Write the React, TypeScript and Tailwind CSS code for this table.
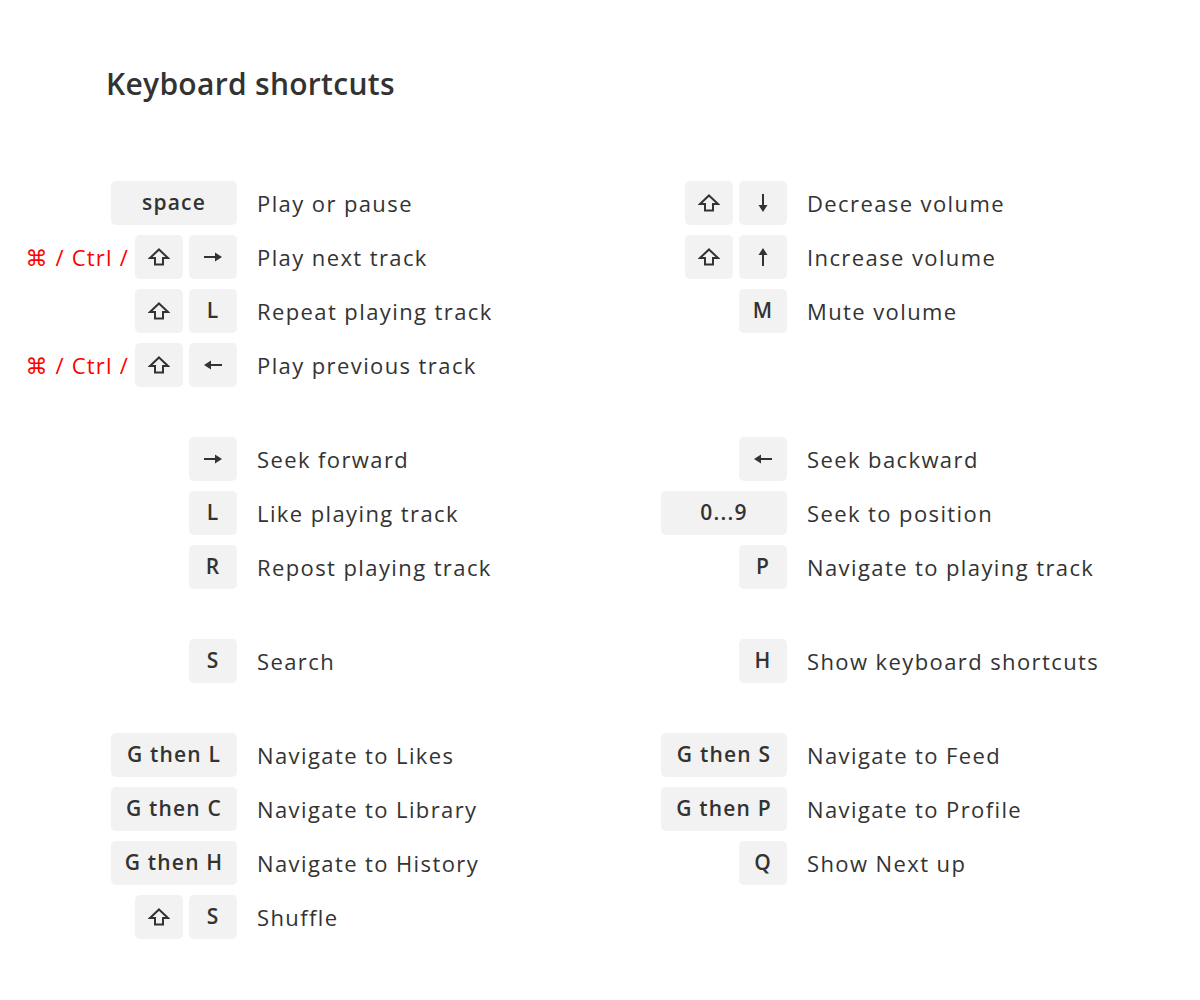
import React from 'react';

type KeyName = string;

type Row = {
  keys: KeyName[];
  label: string;
  prefix?: boolean;
};

type Group = {
  left: Row[];
  right: Row[];
};

const groups: Group[] = [
  {
    left: [
      { keys: ['space'], label: 'Play or pause' },
      { keys: ['shift', 'right'], label: 'Play next track', prefix: true },
      { keys: ['shift', 'L'], label: 'Repeat playing track' },
      { keys: ['shift', 'left'], label: 'Play previous track', prefix: true },
    ],
    right: [
      { keys: ['shift', 'down'], label: 'Decrease volume' },
      { keys: ['shift', 'up'], label: 'Increase volume' },
      { keys: ['M'], label: 'Mute volume' },
    ],
  },
  {
    left: [
      { keys: ['right'], label: 'Seek forward' },
      { keys: ['L'], label: 'Like playing track' },
      { keys: ['R'], label: 'Repost playing track' },
    ],
    right: [
      { keys: ['left'], label: 'Seek backward' },
      { keys: ['0...9'], label: 'Seek to position' },
      { keys: ['P'], label: 'Navigate to playing track' },
    ],
  },
  {
    left: [{ keys: ['S'], label: 'Search' }],
    right: [{ keys: ['H'], label: 'Show keyboard shortcuts' }],
  },
  {
    left: [
      { keys: ['G then L'], label: 'Navigate to Likes' },
      { keys: ['G then C'], label: 'Navigate to Library' },
      { keys: ['G then H'], label: 'Navigate to History' },
      { keys: ['shift', 'S'], label: 'Shuffle' },
    ],
    right: [
      { keys: ['G then S'], label: 'Navigate to Feed' },
      { keys: ['G then P'], label: 'Navigate to Profile' },
      { keys: ['Q'], label: 'Show Next up' },
    ],
  },
];

const ShiftIcon = () => (
  <svg width="22" height="18" viewBox="0 0 22 18" fill="none">
    <path
      d="M11 1.5 L20 10 H15 V16.5 H7 V10 H2 Z"
      stroke="#333"
      strokeWidth="2"
      strokeLinejoin="miter"
    />
  </svg>
);

const ArrowIcon = ({ dir }: { dir: 'left' | 'right' | 'up' | 'down' }) => {
  if (dir === 'left' || dir === 'right') {
    return (
      <svg width="18" height="10" viewBox="0 0 18 10" fill="#333">
        {dir === 'right' ? (
          <>
            <rect x="0" y="4" width="13" height="2" />
            <path d="M11 0.5 L18 5 L11 9.5 Z" />
          </>
        ) : (
          <>
            <rect x="5" y="4" width="13" height="2" />
            <path d="M7 0.5 L0 5 L7 9.5 Z" />
          </>
        )}
      </svg>
    );
  }
  return (
    <svg width="10" height="18" viewBox="0 0 10 18" fill="#333">
      {dir === 'down' ? (
        <>
          <rect x="4" y="0" width="2" height="13" />
          <path d="M0.5 11 L5 18 L9.5 11 Z" />
        </>
      ) : (
        <>
          <rect x="4" y="5" width="2" height="13" />
          <path d="M0.5 7 L5 0 L9.5 7 Z" />
        </>
      )}
    </svg>
  );
};

const Key = ({ name }: { name: KeyName }) => {
  const wide = name.length > 1 && !['shift', 'left', 'right', 'up', 'down'].includes(name);
  let content: React.ReactNode = name;
  if (name === 'shift') content = <ShiftIcon />;
  if (name === 'left' || name === 'right' || name === 'up' || name === 'down') content = <ArrowIcon dir={name} />;
  return (
    <div
      className={`${wide ? 'w-[126px]' : 'w-[48px]'} h-[44px] flex items-center justify-center rounded-[5px] bg-[#f2f2f2] text-[21px] font-semibold tracking-[1.2px] text-[#333]`}
    >
      {content}
    </div>
  );
};

const ShortcutRow = ({ row }: { row: Row }) => (
  <div className="flex items-center">
    <div className="w-[237px] flex items-center justify-end gap-[6px]">
      {row.prefix && (
        <span className="text-[22px] tracking-[1.2px] text-[#f00] whitespace-nowrap">⌘ / Ctrl /</span>
      )}
      {row.keys.map((k, i) => (
        <Key key={i} name={k} />
      ))}
    </div>
    <span className="ml-[20px] text-[22px] tracking-[1.4px] text-[#333] whitespace-nowrap">{row.label}</span>
  </div>
);

const App = () => {
  return (
    <div className="w-[1200px] h-[1000px] bg-white pt-[64px]" style={{ fontFamily: '"Open Sans", "DejaVu Sans", sans-serif' }}>
      <h1 className="pl-[106px] text-[30px] leading-[40px] font-semibold tracking-[0.3px] text-[#333]">Keyboard shortcuts</h1>
      <div className="mt-[77px] flex flex-col gap-[50px]">
        {groups.map((g, gi) => (
          <div key={gi} className="flex">
            <div className="w-[550px] flex flex-col gap-[10px]">
              {g.left.map((r, ri) => (
                <ShortcutRow key={ri} row={r} />
              ))}
            </div>
            <div className="w-[550px] flex flex-col gap-[10px]">
              {g.right.map((r, ri) => (
                <ShortcutRow key={ri} row={r} />
              ))}
            </div>
          </div>
        ))}
      </div>
    </div>
  );
};

export default App;
